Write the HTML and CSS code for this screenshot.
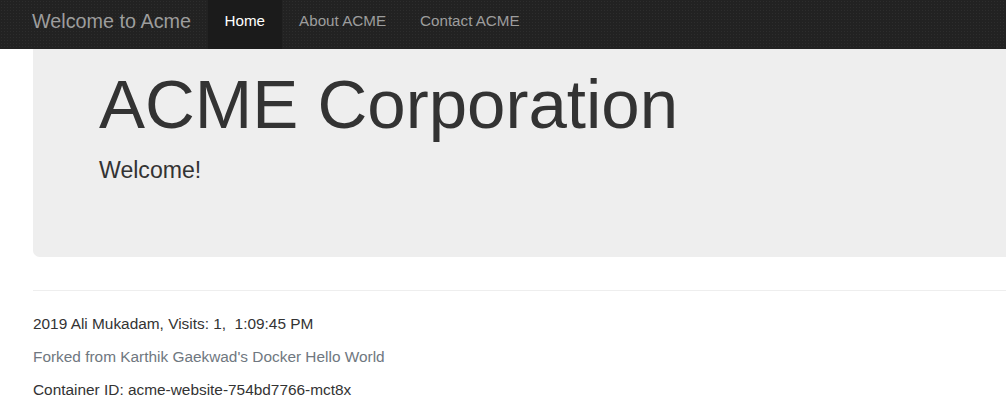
FILE: index.html
```html
<!DOCTYPE html>
<html lang="en">
<head>
<meta charset="utf-8">
<title>Welcome to Acme</title>
<link rel="stylesheet" href="styles.css">
</head>
<body>
<nav class="navbar">
  <a class="brand" href="#">Welcome to Acme</a>
  <ul class="nav">
    <li class="nav-item active"><a href="#">Home</a></li>
    <li class="nav-item"><a href="#">About ACME</a></li>
    <li class="nav-item"><a href="#">Contact ACME</a></li>
  </ul>
</nav>
<main class="container">
  <section class="jumbotron">
    <h1 class="title">ACME Corporation</h1>
    <p class="lead">Welcome!</p>
  </section>
  <hr class="rule">
  <footer class="footer">
    <p class="line">2019 Ali Mukadam, Visits: 1,&nbsp; 1:09:45 PM</p>
    <p class="line"><a class="fork" href="#">Forked from Karthik Gaekwad's Docker Hello World</a></p>
    <p class="line">Container ID: acme-website-754bd7766-mct8x</p>
  </footer>
</main>
</body>
</html>
```
FILE: styles.css
```css
html, body {
  margin: 0;
  padding: 0;
  background: #fff;
}
body {
  font-family: "Liberation Sans", Arial, sans-serif;
  color: #333;
  font-size: 15.4px;
  line-height: 22px;
  overflow: hidden;
}
a { text-decoration: none; }

.navbar {
  display: flex;
  align-items: stretch;
  height: 49px;
  background-color: #222;
  background-image: radial-gradient(rgba(255,255,255,0.05) 0.6px, transparent 0.8px);
  background-size: 3px 3px;
  padding-left: 15.5px;
}
.brand {
  display: block;
  padding: 10.5px 16.5px 0;
  font-size: 19.8px;
  line-height: 20px;
  color: #9d9d9d;
}
.nav {
  display: flex;
  list-style: none;
  margin: 0;
  padding: 0;
}
.nav-item a {
  display: block;
  height: 100%;
  box-sizing: border-box;
  padding: 10.8px 17px 0;
  font-size: 15.2px;
  line-height: 20px;
  color: #9d9d9d;
}
.nav-item.active a {
  background: #1b1b1b;
  color: #fff;
}

.container {
  padding-left: 33px;
}
.jumbotron {
  background: #eee;
  height: 207.7px;
  box-sizing: border-box;
  padding: 18.2px 66px 0;
  border-radius: 0 0 0 6.6px;
  margin-bottom: 33px;
}
.title {
  margin: 0 0 11px;
  font-size: 69px;
  line-height: 76.2px;
  font-weight: 400;
  color: #333;
}
.lead {
  margin: 0;
  font-size: 23.1px;
  line-height: 33px;
  font-weight: 200;
}
.rule {
  margin: 0 0 22px;
  border: 0;
  border-top: 1px solid #eee;
  height: 0;
}
.footer .line {
  margin: 0 0 11px;
}
.fork {
  color: #6f7780;
}
```
